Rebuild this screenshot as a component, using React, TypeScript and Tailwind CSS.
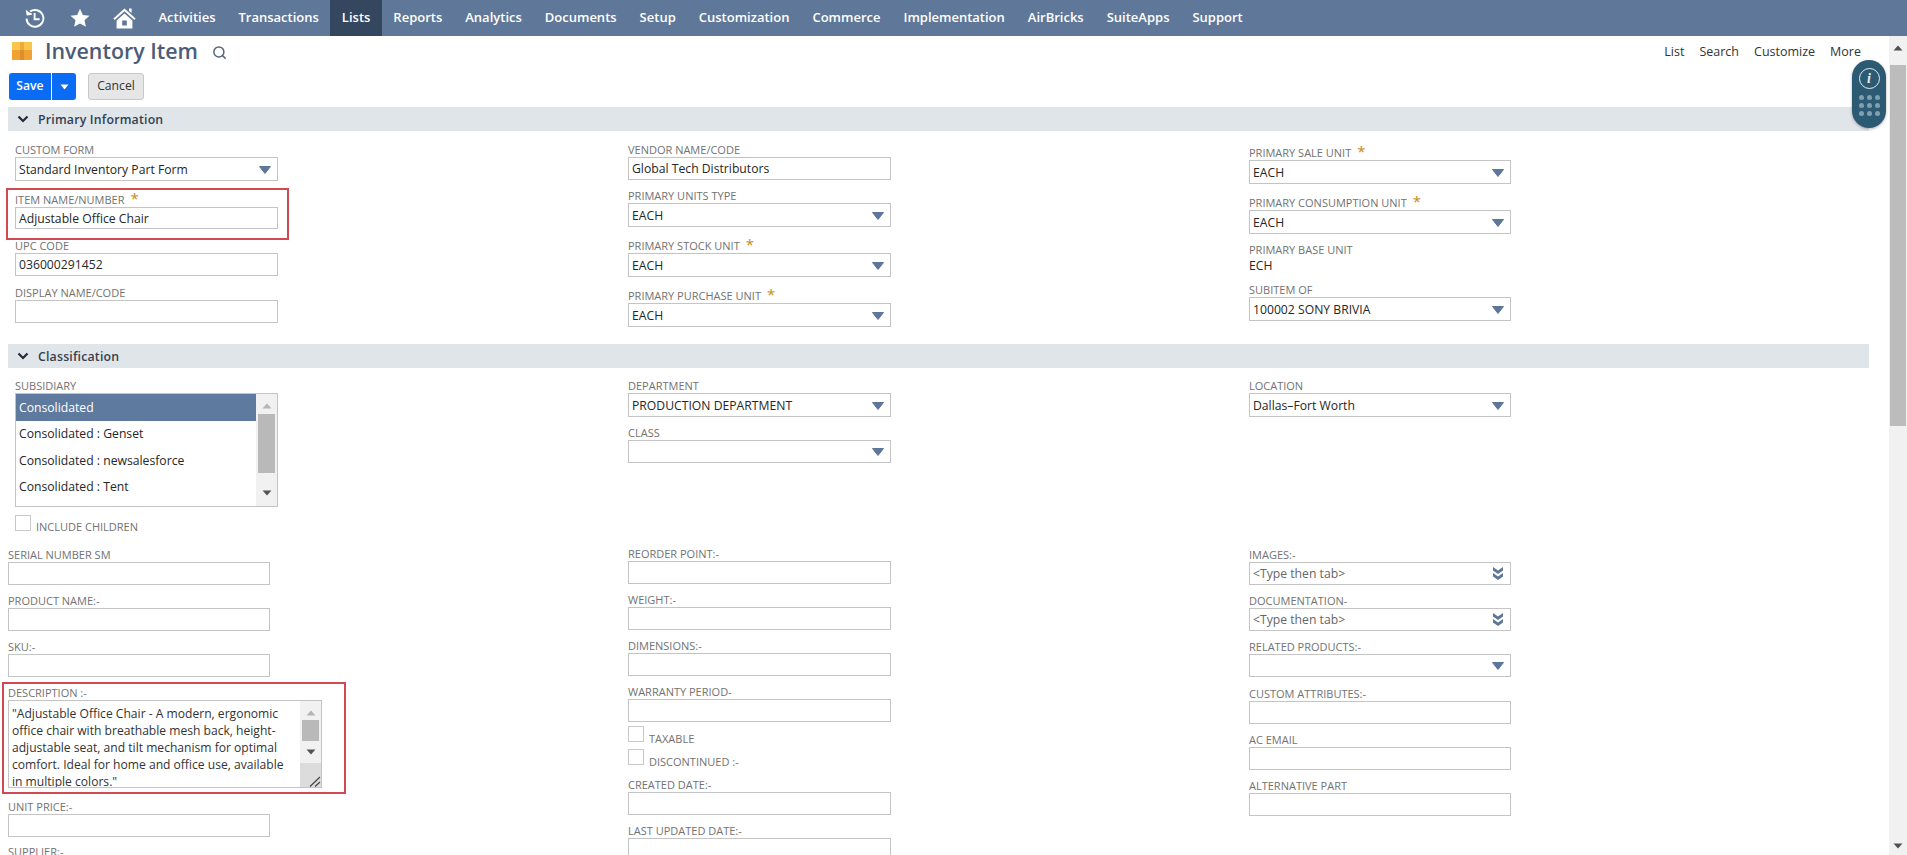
import React from "react";
import { Search } from "lucide-react";

const navItems = [
  "Activities",
  "Transactions",
  "Lists",
  "Reports",
  "Analytics",
  "Documents",
  "Setup",
  "Customization",
  "Commerce",
  "Implementation",
  "AirBricks",
  "SuiteApps",
  "Support",
];

const ArrowDown = () => (
  <svg width="12" height="9" viewBox="0 0 12 9" className="shrink-0">
    <path d="M0.5 1.5h11L6 8.5z" fill="#5d7699" stroke="#5d7699" strokeLinejoin="round" />
  </svg>
);

const DoubleArrow = () => (
  <svg width="12" height="15" viewBox="0 0 12 15" className="shrink-0">
    <path d="M1 1l5 3.6L11 1v3.4L6 8 1 4.4z" fill="#5d7699" />
    <path d="M1 7l5 3.6L11 7v3.4L6 14 1 10.4z" fill="#5d7699" />
  </svg>
);

const Star = () => <span className="text-[#c98a10] text-[15px] leading-[13px] ml-[6px] relative -top-[1px]">*</span>;

const Label: React.FC<{ text: string; required?: boolean; className?: string }> = ({ text, required, className }) => (
  <div className={"flex items-center text-[11px] leading-[13px] h-[13px] pb-[2px] text-[#727272] uppercase whitespace-nowrap " + (className || "")}>
    {text}
    {required && <Star />}
  </div>
);

const Box: React.FC<{ value?: string; kind?: "select" | "multi"; h?: string; w?: string; muted?: boolean }> = ({
  value,
  kind,
  h = "h-[23px]",
  w = "w-[263px]",
  muted,
}) => (
  <div
    className={
      "flex items-center justify-between border border-[#c4c4c4] bg-white pl-[3px] pr-[6px] text-[12.2px] whitespace-nowrap " +
      h +
      " " +
      w +
      (muted ? " text-[#666]" : " text-[#262626]")
    }
  >
    <span className="pt-[2px]">{value}</span>
    {kind === "select" && <ArrowDown />}
    {kind === "multi" && <DoubleArrow />}
  </div>
);

const SectionBar: React.FC<{ title: string; className?: string }> = ({ title, className }) => (
  <div className={"flex items-center h-[24px] w-[1861px] ml-[8px] bg-[#e0e5ea] text-[#333f4f] " + (className || "")}>
    <svg width="12" height="9" viewBox="0 0 12 9" className="ml-[9px]">
      <path d="M1.5 1.5L6 6l4.5-4.5" fill="none" stroke="#222b36" strokeWidth="2.2" />
    </svg>
    <span className="ml-[9px] pt-[2px] text-[12.3px] font-semibold tracking-[0.2px]">{title}</span>
  </div>
);

const Check: React.FC<{ label: string; className?: string; labelClass?: string }> = ({
  label,
  className,
  labelClass = "mt-[6px]",
}) => (
  <div className={"flex h-[16px] " + (className || "")}>
    <div className="w-[16px] h-[16px] border border-[#c9c9c9] bg-white" />
    <span className={"ml-[5px] text-[11px] leading-[13px] text-[#727272] whitespace-nowrap " + labelClass}>{label}</span>
  </div>
);

const SmallTri: React.FC<{ up?: boolean; color?: string }> = ({ up, color = "#555" }) => (
  <svg width="10" height="6" viewBox="0 0 10 6">
    <path d={up ? "M5 0.5L9.5 5.5H0.5z" : "M0.5 0.5H9.5L5 5.5z"} fill={color} />
  </svg>
);

const Redline: React.FC<{ className: string }> = ({ className }) => (
  <div className={"absolute border-2 border-[#cf4a52] pointer-events-none " + className} />
);

const descriptionLines = [
  '"Adjustable Office Chair - A modern, ergonomic',
  "office chair with breathable mesh back, height-",
  "adjustable seat, and tilt mechanism for optimal",
  "comfort. Ideal for home and office use, available",
  'in multiple colors."',
];

export default function App() {
  return (
    <div className="relative h-[855px] w-[1907px] overflow-hidden bg-white flex flex-col font-['Open_Sans',sans-serif]">
      {/* top nav */}
      <div className="h-[36px] shrink-0 bg-[#5f7899] flex items-stretch pl-[25px]">
        <div className="flex items-center">
          <svg width="20" height="20" viewBox="0 0 20 20" fill="none" stroke="#fff" strokeWidth="1.9">
            <path d="M5 3.6A8.4 8.4 0 1 1 1.6 10.6" />
            <path d="M1.4 2.4l.9 4.4 4.5-.8" strokeWidth="1.4" fill="#fff" />
            <path d="M9.6 5v6.2h5" />
          </svg>
          <svg width="20" height="20" viewBox="0 0 20 20" className="ml-[25px]">
            <path d="M10 .8l2.8 6.2 6.7.7-5 4.5 1.4 6.6-5.9-3.4-5.9 3.4 1.4-6.6-5-4.5 6.7-.7z" fill="#fff" />
          </svg>
          <svg width="23" height="21" viewBox="0 0 23 21" className="ml-[23px]" fill="#fff">
            <path d="M16 .5h2.6v4.6L16 3z" />
            <path d="M11.5.6L.4 10.6l1.3 1.5 9.8-8.8 9.8 8.8 1.3-1.5z" />
            <path fillRule="evenodd" d="M11.5 5.4L3.6 12.4v8.2h15.8v-8.2zM9.2 12.6h4.6v4.8H9.2z" />
          </svg>
        </div>
        <div className="flex items-stretch ml-[11px]">
          {navItems.map((item) => (
            <div
              key={item}
              className={
                "flex items-center px-[11.5px] text-[13px] font-semibold text-white " +
                (item === "Lists" ? "bg-[#34475f]" : "")
              }
            >
              {item}
            </div>
          ))}
        </div>
      </div>

      <div className="flex flex-1 min-h-0">
        <div className="flex-1 min-w-0">
          {/* page title */}
          <div className="flex h-[34px] pl-[12px] pr-[28px] items-start">
            <svg width="20" height="18" viewBox="0 0 20 18" className="mt-[6px]">
              <rect width="20" height="18" rx="1" fill="#f0a233" />
              <rect width="20" height="8" fill="#f9c64d" />
              <rect x="8" width="4" height="18" fill="#e08e2c" />
              <rect x="8" width="4" height="8" fill="#efab38" />
            </svg>
            <div className="ml-[13px] text-[21.4px] leading-[29px] font-semibold text-[#4d5c76]">Inventory Item</div>
            <Search size={15} color="#56667e" strokeWidth={2.4} className="ml-[14px] mt-[9px]" />
            <div className="ml-auto flex gap-[15px] mt-[8px] text-[12.5px] leading-[16px] text-[#333]">
              <span>List</span>
              <span>Search</span>
              <span>Customize</span>
              <span>More</span>
            </div>
          </div>

          {/* actions */}
          <div className="flex mt-[3px] ml-[9px] h-[27px]">
            <div className="flex w-[67px] rounded-[3px] bg-[#0a6cf5] text-white overflow-hidden">
              <div className="w-[43px] flex items-center justify-center text-[12.2px] font-semibold border-r border-white">Save</div>
              <div className="flex-1 flex items-center justify-center">
                <svg width="9" height="6" viewBox="0 0 9 6">
                  <path d="M.5 .5h8L4.5 5.5z" fill="#fff" />
                </svg>
              </div>
            </div>
            <div className="ml-[12px] w-[56px] flex items-center justify-center rounded-[3px] bg-[#e6e6e6] border border-[#c9c9c9] text-[12.2px] text-[#333]">
              Cancel
            </div>
          </div>

          <SectionBar title="Primary Information" className="mt-[7px]" />

          {/* primary information */}
          <div className="grid grid-cols-[620px_621px_1fr] pl-[8px] pt-[13px]">
            <div className="pl-[7px] relative">
              <Label text="Custom Form" />
              <Box value="Standard Inventory Part Form" kind="select" h="h-[24px]" />
              <div className="relative mt-[12px]">
                <Redline className="-left-[9px] -top-[5px] w-[283px] h-[52px]" />
                <Label text="Item Name/Number" required className="h-[14px]" />
                <Box value="Adjustable Office Chair" h="h-[22px]" />
              </div>
              <Label text="UPC Code" className="mt-[11px]" />
              <Box value="036000291452" />
              <Label text="Display Name/Code" className="mt-[11px]" />
              <Box />
            </div>
            <div>
              <Label text="Vendor Name/Code" />
              <Box value="Global Tech Distributors" />
              <Label text="Primary Units Type" className="mt-[10px]" />
              <Box value="EACH" kind="select" h="h-[24px]" />
              <Label text="Primary Stock Unit" required className="mt-[13px]" />
              <Box value="EACH" kind="select" h="h-[24px]" />
              <Label text="Primary Purchase Unit" required className="mt-[13px]" />
              <Box value="EACH" kind="select" h="h-[24px]" />
            </div>
            <div>
              <Label text="Primary Sale Unit" required className="mt-[2px] h-[14px]" />
              <Box value="EACH" kind="select" w="w-[262px]" h="h-[24px]" />
              <Label text="Primary Consumption Unit" required className="mt-[12px] h-[14px]" />
              <Box value="EACH" kind="select" w="w-[262px]" h="h-[24px]" />
              <Label text="Primary Base Unit" className="mt-[10px]" />
              <div className="h-[15px] mt-[1px] text-[12.2px] leading-[15px] text-[#262626]">ECH</div>
              <Label text="Subitem Of" className="mt-[11px]" />
              <Box value="100002 SONY BRIVIA" kind="select" w="w-[262px]" h="h-[24px]" />
            </div>
          </div>

          <SectionBar title="Classification" className="mt-[17px]" />

          {/* classification */}
          <div className="grid grid-cols-[620px_621px_1fr] pl-[8px] pt-[12px]">
            <div>
              <Label text="Subsidiary" className="ml-[7px]" />
              <div className="ml-[7px] w-[263px] h-[114px] flex border border-[#c4c4c4] text-[12.2px] text-[#262626]">
                <div className="flex-1">
                  <div className="h-[27px] flex items-center pl-[3px] pt-[1px] bg-[#5f7a9f] text-white">Consolidated</div>
                  <div className="h-[27px] flex items-center pl-[3px]">Consolidated : Genset</div>
                  <div className="h-[26px] flex items-center pl-[3px] pt-[1px]">Consolidated : newsalesforce</div>
                  <div className="h-[26px] flex items-center pl-[3px] pt-[1px]">Consolidated : Tent</div>
                </div>
                <div className="w-[21px] bg-[#f1f1f1] flex flex-col items-center pt-[9px]">
                  <SmallTri up color="#b5b5b5" />
                  <div className="w-[17px] h-[59px] bg-[#b9b9b9] mt-[5px]" />
                  <div className="mt-[17px]">
                    <SmallTri color="#555" />
                  </div>
                </div>
              </div>
              <Check label="INCLUDE CHILDREN" className="ml-[7px] mt-[8px]" labelClass="mt-[5px]" />

              <Label text="Serial Number SM" className="mt-[18px]" />
              <Box w="w-[262px]" />
              <Label text="Product Name:-" className="mt-[10px]" />
              <Box w="w-[262px]" />
              <Label text="SKU:-" className="mt-[10px]" />
              <Box w="w-[262px]" />

              <div className="relative mt-[10px]">
                <Redline className="-left-[6px] -top-[5px] w-[344px] h-[112px]" />
                <Label text="Description :-" />
                <div className="flex w-[314px] h-[88px] border border-[#c4c4c4] overflow-hidden">
                  <div className="flex-1 pl-[3px] pt-[4px] text-[12.1px] leading-[17px] text-[#333] whitespace-nowrap">
                    {descriptionLines.map((line) => (
                      <div key={line}>{line}</div>
                    ))}
                  </div>
                  <div className="w-[21px] bg-[#f1f1f1] flex flex-col items-center pt-[9px]">
                    <SmallTri up color="#b5b5b5" />
                    <div className="w-[17px] h-[21px] bg-[#b9b9b9] mt-[4px]" />
                    <div className="mt-[8px] leading-[0]">
                      <SmallTri color="#555" />
                    </div>
                    <div className="mt-[8px] flex-1 w-full bg-[#dcdcdc] flex items-end justify-end">
                      <svg width="12" height="12" viewBox="0 0 12 12" stroke="#444" strokeWidth="1.2">
                        <path d="M1 11.5L11 2M6 11.5L11 7" />
                      </svg>
                    </div>
                  </div>
                </div>
              </div>

              <Label text="Unit Price:-" className="mt-[13px]" />
              <Box w="w-[262px]" />
              <Label text="Supplier:-" className="mt-[9px]" />
            </div>

            <div>
              <Label text="Department" />
              <Box value="PRODUCTION DEPARTMENT" kind="select" h="h-[24px]" />
              <Label text="Class" className="mt-[10px]" />
              <Box kind="select" />
              <Label text="Reorder Point:-" className="mt-[85px]" />
              <Box />
              <Label text="Weight:-" className="mt-[10px]" />
              <Box />
              <Label text="Dimensions:-" className="mt-[10px]" />
              <Box />
              <Label text="Warranty Period-" className="mt-[10px]" />
              <Box />
              <Check label="TAXABLE" className="mt-[4px]" />
              <Check label="DISCONTINUED :-" className="mt-[7px]" />
              <Label text="Created Date:-" className="mt-[14px]" />
              <Box />
              <Label text="Last Updated Date:-" className="mt-[10px]" />
              <Box />
            </div>

            <div>
              <Label text="Location" />
              <Box value="Dallas–Fort Worth" kind="select" w="w-[262px]" h="h-[24px]" />
              <Label text="Images:-" className="mt-[132px]" />
              <Box value="<Type then tab>" kind="multi" w="w-[262px]" muted />
              <Label text="Documentation-" className="mt-[10px]" />
              <Box value="<Type then tab>" kind="multi" w="w-[262px]" muted />
              <Label text="Related Products:-" className="mt-[10px]" />
              <Box kind="select" w="w-[262px]" />
              <Label text="Custom Attributes:-" className="mt-[11px]" />
              <Box w="w-[262px]" />
              <Label text="AC Email" className="mt-[10px]" />
              <Box w="w-[262px]" />
              <Label text="Alternative Part" className="mt-[10px]" />
              <Box w="w-[262px]" />
            </div>
          </div>
        </div>

        {/* page scrollbar */}
        <div className="w-[18px] shrink-0 bg-[#f1f1f1] flex flex-col items-center pt-[9px]">
          <SmallTri up color="#505050" />
          <div className="w-[16px] h-[361px] bg-[#bcbcbc] mt-[14px]" />
          <div className="mt-auto mb-[6px] leading-[0]">
            <SmallTri color="#505050" />
          </div>
        </div>
      </div>

      {/* floating help pill */}
      <div className="absolute left-[1852px] top-[60px] w-[34px] h-[68px] rounded-[17px] bg-[#2b5a72] shadow-[0_1px_3px_rgba(0,0,0,0.3)] flex flex-col items-center pt-[8px]">
        <div className="w-[21px] h-[21px] rounded-full border-[1.5px] border-[#e5edf1] flex items-center justify-center text-[#e5edf1] text-[14px] leading-none font-['Liberation_Serif',serif] italic font-bold">
          i
        </div>
        <div className="grid grid-cols-3 gap-[3px] mt-[6px]">
          {Array.from({ length: 9 }).map((_, i) => (
            <div key={i} className="w-[5px] h-[5px] rounded-full bg-[#7ea0b1]" />
          ))}
        </div>
      </div>
    </div>
  );
}
